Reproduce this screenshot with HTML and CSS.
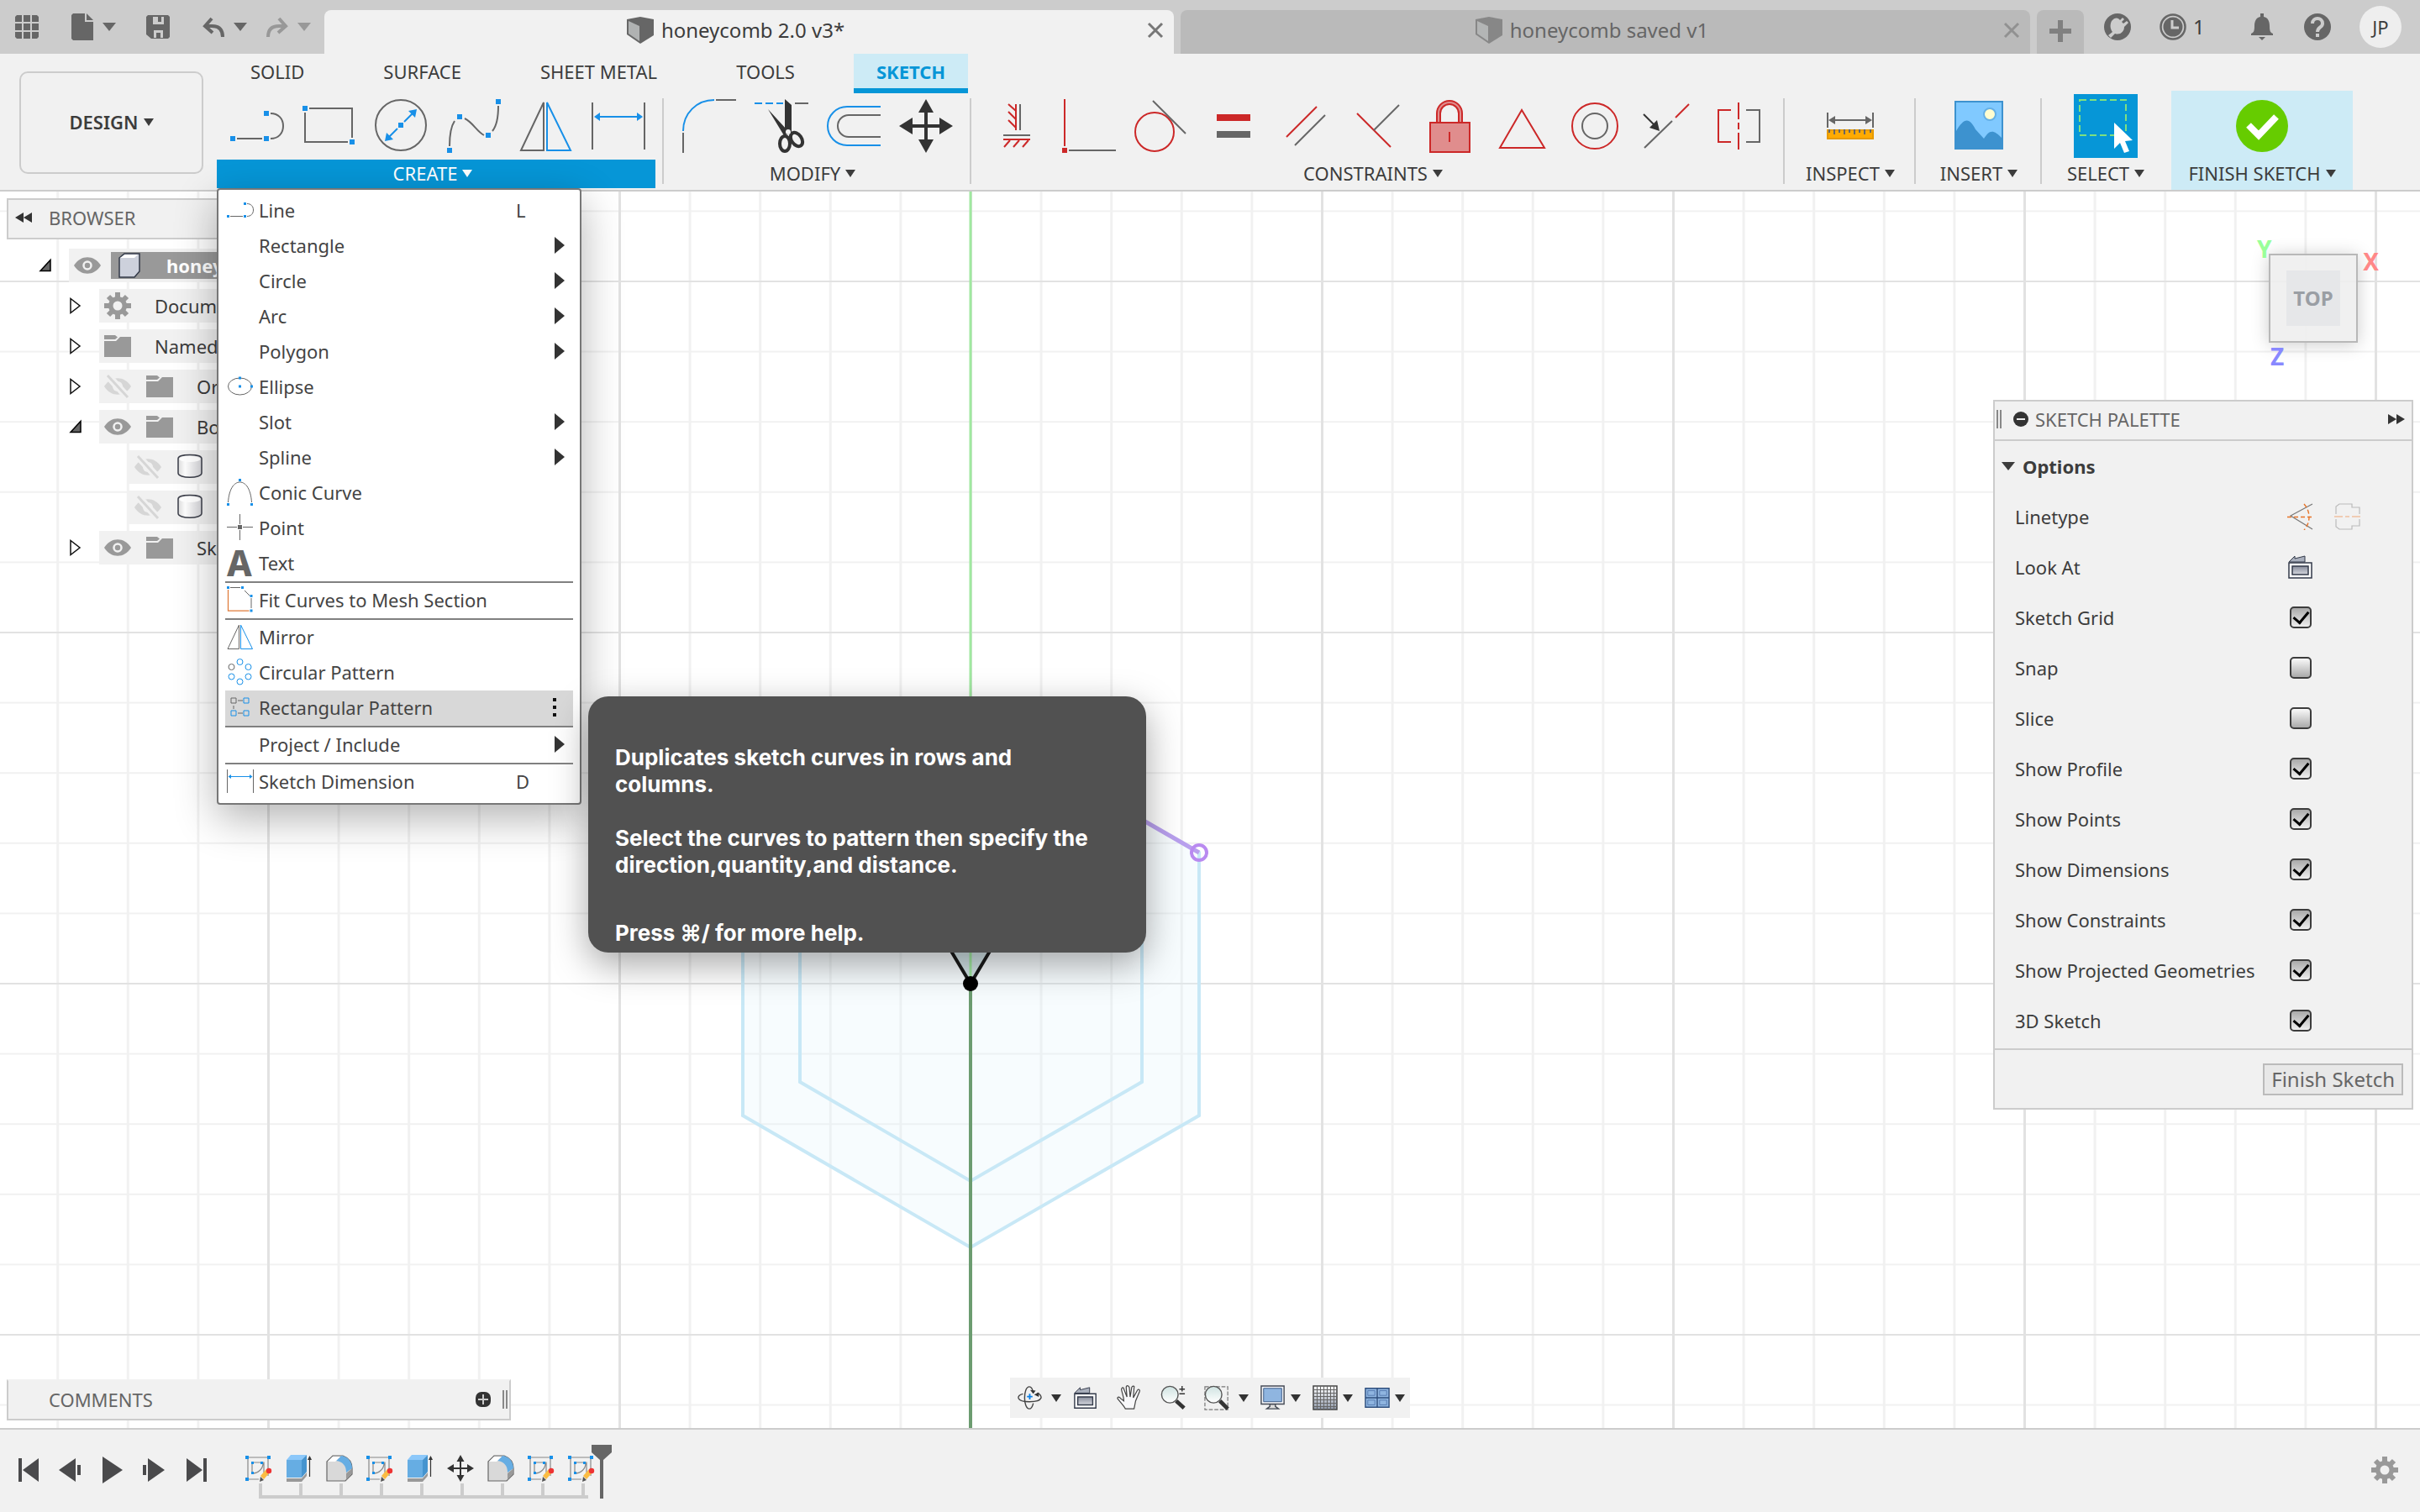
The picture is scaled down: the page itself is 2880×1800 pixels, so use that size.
FILE: index.html
```html
<!DOCTYPE html>
<html lang="en">
<head>
    <meta charset="UTF-8">
    <meta name="viewport" content="width=device-width, initial-scale=1.0">
    <title>honeycomb 2.0 v3*</title>
    <link rel="stylesheet" href="styles.css">
</head>
<body>
    <!-- shared icons -->
    <svg class="defs" width="0" height="0" aria-hidden="true">
        <defs>
            <linearGradient id="steel" x1="0" y1="0" x2="0" y2="1"><stop offset="0" stop-color="#878c9b"/><stop offset="1" stop-color="#d5d7de"/></linearGradient>
            <linearGradient id="fade" x1="0" y1="0" x2="0" y2="1"><stop offset="0" stop-color="#fff"/><stop offset="1" stop-color="#8d97a8"/></linearGradient>
            <linearGradient id="cyl" x1="0" y1="0" x2="1" y2="0"><stop offset="0" stop-color="#ddd"/><stop offset="0.3" stop-color="#fff"/><stop offset="1" stop-color="#d4d4d8"/></linearGradient>
            <linearGradient id="lens" x1="0" y1="0" x2="0" y2="1"><stop offset="0" stop-color="#cfe3e1"/><stop offset="1" stop-color="#fff"/></linearGradient>
        </defs>
        <symbol id="i-line" viewBox="0 0 64 64">
            <path class="g" d="M8 47H38M48 17c9 0 15 6 15 15s-6 15-15 15"/>
            <path class="bf" d="M0 44h6v6H0zM40 44h6v6h-6zM40 14h6v6h-6z"/>
        </symbol>
        <symbol id="i-rect" viewBox="0 0 64 64">
            <path class="g" d="M8 11H59V46M54 51H3V16"/>
            <path class="bf" d="M0 8h6v6H0zM56 48h6v6h-6z"/>
        </symbol>
        <symbol id="i-circle" viewBox="0 0 64 64">
            <circle class="g" cx="31" cy="31" r="30"/>
            <path class="b" d="M35 27l11-11M27 35L16 46"/>
            <path class="bf" d="M28 28h6v6h-6zM50 12l-2 10-8-8zM12 50l2-10 8 8z"/>
        </symbol>
        <symbol id="i-spline" viewBox="0 0 64 64">
            <path class="g" d="M3 56C3 42 5 32 9 26M21 23c10 5 14 15 23 20M54 38c5-6 7-18 7-30"/>
            <path class="bf" d="M0 58h6v6H0zM12 18h6v6h-6zM46 40h6v6h-6zM58 0h6v6h-6z"/>
        </symbol>
        <symbol id="i-mirror" viewBox="0 0 64 64">
            <path class="g" d="M29 4V61H2z"/>
            <path class="b" d="M33 4V61H61z"/>
        </symbol>
        <symbol id="i-dim" viewBox="0 0 64 64">
            <path class="g" d="M1 4V60M63 4V60"/>
            <path class="b" stroke-width="3" d="M8 21H56"/>
            <path class="bf" d="M3 21l7-5v10zM61 21l-7-5v10z"/>
        </symbol>
        <symbol id="i-move" viewBox="0 0 64 64">
            <path fill="#333" d="M32 0l9 16h-7v14h14v-8l16 10-16 10v-8H34v14h7l-9 16-9-16h7V34H16v8L0 32l16-10v8h14V16h-7z"/>
        </symbol>
        <symbol id="i-cube" viewBox="0 0 32 32">
            <path fill="#666" d="M0 3L16 0l16 3v19L16 32 0 21z"/>
            <path fill="#b0b2b2" d="M2 5l13 6v18L2 20z"/>
        </symbol>
        <symbol id="i-eye" viewBox="0 0 32 32">
            <path fill="#999" d="M0 16C8 3 24 3 32 16 24 29 8 29 0 16z"/>
            <circle cx="16" cy="16" r="4.5" fill="none" stroke="#f1f1f1" stroke-width="2.5"/>
        </symbol>
        <symbol id="i-eye-off" viewBox="0 0 32 32">
            <path fill="#d6d6d6" d="M0 16C8 3 24 3 32 16 24 29 8 29 0 16z"/>
            <circle cx="16" cy="16" r="6" fill="#f1f1f1"/>
            <path stroke="#f1f1f1" stroke-width="9" d="M4 3l24 26"/>
            <path stroke="#d6d6d6" stroke-width="3" d="M4 3l24 26"/>
        </symbol>
        <symbol id="i-folder" viewBox="0 0 32 32">
            <path fill="#999" d="M0 3h13l3 2.500-3 2.500H0zM0 10h14l5-5h13v24H0z"/>
        </symbol>
        <symbol id="i-gear" viewBox="0 0 32 32">
            <path stroke="#999" stroke-width="6" d="M16 0V32M0 16H32M5 5l22 22M27 5L5 27"/>
            <circle cx="16" cy="16" r="11" fill="#999"/>
            <circle cx="16" cy="16" r="5.500" fill="#f1f1f1"/>
        </symbol>
        <symbol id="i-body" viewBox="0 0 32 32">
            <path fill="url(#cyl)" stroke="#3a3d48" stroke-width="1.500" d="M2 6v17c0 7 28 7 28 0V6c0-6-28-6-28 0z"/>
            <ellipse cx="16" cy="6.500" rx="12.500" ry="3.500" fill="#fff"/>
        </symbol>
        <symbol id="i-closed" viewBox="0 0 16 20">
            <path fill="#fff" stroke="#111" stroke-width="1.500" d="M2 1.500V18.500L13 10z"/>
        </symbol>
        <symbol id="i-open" viewBox="0 0 16 16">
            <path fill="#666" stroke="#000" stroke-width="1.500" d="M14 1.500V14.500H2z"/>
        </symbol>
        <symbol id="i-lookat" viewBox="0 0 32 32">
            <path fill="#aab0bd" stroke="#333a4a" d="M2 10l7-7v3l12-3v7z"/>
            <path fill="#fff" stroke="#333a4a" stroke-width="1.500" d="M2 11h27v18H2z"/>
            <path fill="url(#steel)" stroke="#333a4a" stroke-width="1.500" d="M6 15h19v10H6z"/>
        </symbol>
        <symbol id="t-sketch" viewBox="0 0 32 32">
            <path fill="none" stroke="#888" stroke-width="1.200" d="M3 3h24v22M3 3v26h13M8 9h14v12M8 22c8 0 13-6 13-12M8 9v12"/>
            <path class="bf" d="M0 1h4v4H0zM26 1h4v4h-4zM0 27h4v4H0zM7 8h3v3H7zM18 8h3v3h-3zM7 20h3v3H7z"/>
            <path fill="#fbbc43" d="M18 25l7-8 4 4-7 8z"/>
            <path fill="#555" d="M18 26l4 4-5 2z"/>
            <circle cx="28" cy="19" r="3.200" fill="#e33"/>
        </symbol>
        <symbol id="t-extrude" viewBox="0 0 32 32">
            <path fill="#999" d="M1 28h18l6-7v4l-6 7H1z"/>
            <path fill="#66ade3" d="M1 6h18v21H1z"/>
            <path fill="#8cc8fa" d="M1 6l5-6h19l-6 6z"/>
            <path fill="#4594cf" d="M25 0v20l-6 7V6z"/>
            <path stroke="#333" stroke-width="1.200" d="M28.500 26V3"/>
            <path fill="#333" d="M28.500 1l2.500 5h-5z"/>
        </symbol>
        <symbol id="t-fillet" viewBox="0 0 32 32">
            <path fill="#d9d9d9" stroke="#666" stroke-width="1.200" d="M1 31V8L8 1h12c8 3 11 9 11 15v7l-8 8z"/>
            <path fill="#66ade3" d="M12 7l6-6c8 1 13 7 13 15l-7 5C24 13 20 8 12 7z"/>
            <path fill="#fff" d="M2 8l6-6h9l-6 6z"/>
            <path fill="#999" d="M24 22l6-5v6l-6 7z"/>
        </symbol>
    </svg>

    <header class="appbar">
        <div class="quick">
            <button aria-label="Data panel"><svg viewBox="0 0 32 32"><path fill="#666" d="M4 2h6v8H2V4zM12 2h8v8h-8zM22 2h6l2 2v6h-8zM2 12h8v8H2zM12 12h8v8h-8zM22 12h8v8h-8zM2 22h8v8H4l-2-2zM12 22h8v8h-8zM22 22h8v6l-2 2h-6z"/></svg></button>
            <button class="pair" aria-label="File"><svg viewBox="0 0 32 32"><path fill="#666" d="M5 0h14v10h10v22H5L3 30V2zM21 0l8 8h-8z"/></svg><span class="caret big"></span></button>
            <button aria-label="Save"><svg viewBox="0 0 32 32"><path fill="#666" fill-rule="evenodd" d="M4 2h24l2 2v24l-2 2H8l-6-5V4zM10 4v9h13V4h-3v6h-4V4zM11 20v9h3v-6h5v6h3v-9z"/></svg></button>
            <div class="history">
                <button class="pair" aria-label="Undo"><svg viewBox="0 0 32 32"><path fill="none" stroke="#666" stroke-width="4" d="M14 6L6 15l9 8M6 15h8c9 0 13 5 13 13"/></svg><span class="caret big"></span></button>
                <button class="pair dim" aria-label="Redo"><svg viewBox="0 0 32 32"><path fill="none" stroke="#666" stroke-width="4" d="M18 6l8 9-9 8M26 15h-8C9 15 5 20 5 28"/></svg><span class="caret big"></span></button>
            </div>
        </div>
        <div class="doctab active">
            <div class="doctitle"><svg><use href="#i-cube"/></svg>honeycomb 2.0 v3*</div>
            <button class="close" aria-label="Close"><svg viewBox="0 0 20 20"><path d="M2 2l16 16M18 2L2 18"/></svg></button>
        </div>
        <div class="doctab">
            <div class="doctitle"><svg><use href="#i-cube"/></svg>honeycomb saved v1</div>
            <button class="close" aria-label="Close"><svg viewBox="0 0 20 20"><path d="M2 2l16 16M18 2L2 18"/></svg></button>
        </div>
        <button class="newtab" aria-label="New tab"><svg viewBox="0 0 26 26"><path fill="#808080" d="M10 0h6v10h10v6H16v10h-6V16H0v-6h10z"/></svg></button>
        <div class="status">
            <button aria-label="Extensions"><svg viewBox="0 0 32 32"><circle cx="16" cy="16" r="16" fill="#666"/><path fill="#ccc" d="M9 9c4-5 8-4 10-1l3-3 2 2-3 3 2 2 4-3 2 2-5 5c0 6-5 10-11 8l-5 5-3-3 5-4c-3-4-3-9-1-13z"/></svg></button>
            <button class="jobs" aria-label="Job status"><svg viewBox="0 0 32 32"><circle cx="16" cy="16" r="14.500" fill="none" stroke="#666" stroke-width="2.500"/><circle cx="16" cy="16" r="11.500" fill="#666"/><path fill="none" stroke="#ccc" stroke-width="3" d="M15 8v9h8"/></svg>1</button>
            <button aria-label="Notifications"><svg viewBox="0 0 32 32"><path fill="#666" d="M14 0h4v4c5 1 7 5 7 11 0 6 1 8 4 9v2H3v-2c3-1 4-3 4-9 0-6 2-10 7-11zM12 28h8l-4 4z"/></svg></button>
            <button aria-label="Help"><svg viewBox="0 0 32 32"><circle cx="16" cy="16" r="16" fill="#666"/><path fill="none" stroke="#ccc" stroke-width="4" d="M10 12c0-8 12-8 12 0 0 5-6 4-6 10"/><path fill="#ccc" d="M14 24h4v4h-4z"/></svg></button>
            <button class="avatar">JP</button>
        </div>
    </header>

    <section class="ribbon">
        <button class="workspace">DESIGN <span class="caret"></span></button>
        <div class="ribbon-main">
            <nav class="tabs">
                <a href="#">SOLID</a>
                <a href="#">SURFACE</a>
                <a href="#">SHEET METAL</a>
                <a href="#">TOOLS</a>
                <a href="#" class="active">SKETCH</a>
            </nav>
            <div class="groups">
                <div class="group create">
                    <div class="tools">
                        <svg><use href="#i-line"/></svg>
                        <svg><use href="#i-rect"/></svg>
                        <svg><use href="#i-circle"/></svg>
                        <svg><use href="#i-spline"/></svg>
                        <svg><use href="#i-mirror"/></svg>
                        <svg><use href="#i-dim"/></svg>
                    </div>
                    <div class="dropdown">
                        <button class="label open">CREATE <span class="caret"></span></button>
                        <ul class="menu">
                            <li><button><svg><use href="#i-line"/></svg>Line<kbd>L</kbd></button></li>
                            <li><button><i></i>Rectangle<span class="sub"></span></button></li>
                            <li><button><i></i>Circle<span class="sub"></span></button></li>
                            <li><button><i></i>Arc<span class="sub"></span></button></li>
                            <li><button><i></i>Polygon<span class="sub"></span></button></li>
                            <li><button><svg viewBox="0 0 64 64"><ellipse class="g" cx="31" cy="32" rx="28" ry="20"/><path class="bf" d="M28 29h6v6h-6zM28 9h6v6h-6zM56 29h6v6h-6z"/></svg>Ellipse</button></li>
                            <li><button><i></i>Slot<span class="sub"></span></button></li>
                            <li><button><i></i>Spline<span class="sub"></span></button></li>
                            <li><button><svg viewBox="0 0 64 64"><path class="g" d="M3 56C5 26 16 8 31 8s26 18 28 48"/><path class="bf" d="M0 58h6v6H0zM56 58h6v6h-6zM28 0h6v6h-6z"/></svg>Conic Curve</button></li>
                            <li><button><svg viewBox="0 0 64 64"><path class="g" d="M31 0V24M31 38V62M0 31H24M38 31H62"/><path fill="#666" d="M26 26h10v10H26z"/></svg>Point</button></li>
                            <li><button><b class="glyph">A</b>Text</button></li>
                            <li class="sep"><button><svg viewBox="0 0 64 64"><path class="g" d="M8 3h24M42 10l12 12M58 28v24"/><path fill="none" stroke="#e07b39" stroke-width="2.500" d="M3 8v50h50"/><path class="bf" d="M0 0h6v6H0zM34 0h6v6h-6zM55 20h6v6h-6zM55 55h6v6h-6z"/></svg>Fit Curves to Mesh Section</button></li>
                            <li class="sep"><button><svg><use href="#i-mirror"/></svg>Mirror</button></li>
                            <li><button><svg viewBox="0 0 64 64"><circle class="g" cx="11" cy="20" r="7"/><g class="b"><circle cx="31" cy="8" r="7"/><circle cx="51" cy="20" r="7"/><circle cx="11" cy="43" r="7"/><circle cx="51" cy="43" r="7"/><circle cx="31" cy="55" r="7"/></g></svg>Circular Pattern</button></li>
                            <li class="hover"><button><svg viewBox="0 0 64 64"><path class="g" d="M10 10h12v12H10zM26 16h12M16 28v8M26 46h12"/><path class="b" d="M40 10h12v12H40zM10 40h12v12H10zM40 40h12v12H40z"/></svg>Rectangular Pattern<span class="more"></span></button>
                                <div class="tooltip">
                                    <p>Duplicates sketch curves in rows and columns.</p>
                                    <p>Select the curves to pattern then specify the direction,quantity,and distance.</p>
                                    <p class="help">Press ⌘/ for more help.</p>
                                </div>
                            </li>
                            <li class="sep"><button><i></i>Project / Include<span class="sub"></span></button></li>
                            <li class="sep"><button><svg><use href="#i-dim"/></svg>Sketch Dimension<kbd>D</kbd></button></li>
                        </ul>
                    </div>
                </div>
                <div class="group">
                    <div class="tools">
                        <svg viewBox="0 0 64 64"><path class="b" d="M1 38C1 17 17 1 38 1"/><path class="g" d="M1 40v24M40 1h24"/></svg>
                        <svg viewBox="0 0 64 64"><path class="b" stroke-dasharray="9 4" d="M0 5h34"/><path class="g" d="M48 5h16"/><path fill="#333" d="M36 0l8 7v34l-8 2zM16 12l22 24-2 9z"/><g fill="none" stroke="#333" stroke-width="4"><ellipse cx="36" cy="53" rx="6" ry="9"/><ellipse cx="50" cy="48" rx="6" ry="9" transform="rotate(-35 50 48)"/></g><circle cx="40" cy="39" r="3" fill="#f1f1f1"/></svg>
                        <svg viewBox="0 0 64 64"><path class="b" d="M64 9H24a23 23 0 0 0 0 46h40"/><path class="g" d="M64 19H26a13 13 0 0 0 0 26h38"/></svg>
                        <svg><use href="#i-move"/></svg>
                    </div>
                    <button class="label">MODIFY <span class="caret"></span></button>
                </div>
                <div class="group">
                    <div class="tools">
                        <svg viewBox="0 0 64 64"><path class="r" d="M31 6v31M31 14l-9-8M31 24l-9-9M31 34l-9-9M16 48h32M24 49l-7 8M35 49l-7 8M46 49l-7 8"/><path class="g" d="M36 6v31M16 43h32"/></svg>
                        <svg viewBox="0 0 64 64"><path class="r" d="M3 0v56"/><path fill="#cc2828" d="M0 58h6v6H0z"/><path class="g" d="M8 61h56"/></svg>
                        <svg viewBox="0 0 64 64"><circle class="r" cx="24" cy="39" r="23"/><path class="g" d="M22 2l39 39"/></svg>
                        <svg viewBox="0 0 64 64"><path fill="#cc2828" d="M12 18h40v8H12z"/><path fill="#666" d="M12 38h40v8H12z"/></svg>
                        <svg viewBox="0 0 64 64"><path class="r" d="M9 45L45 9"/><path class="g" d="M19 55l36-36"/></svg>
                        <svg viewBox="0 0 64 64"><path class="r" d="M7 17l40 40"/><path class="g" d="M57 7L27 37"/></svg>
                        <svg viewBox="0 0 64 64"><path fill="none" stroke="#cc2828" stroke-width="6" d="M18 27V17a13 13 0 0 1 26 0v10"/><path fill="none" stroke="#e08d8d" stroke-width="2" d="M18 27V17a13 13 0 0 1 26 0v10"/><path fill="#e08d8d" stroke="#cc2828" stroke-width="2" d="M8 28h47v35H8z"/><path class="r" d="M31 39v12"/></svg>
                        <svg viewBox="0 0 64 64"><path class="r" d="M31 13L5 58h53z"/></svg>
                        <svg viewBox="0 0 64 64"><circle class="r" cx="32" cy="32" r="27"/><circle class="g" cx="32" cy="32" r="15"/></svg>
                        <svg viewBox="0 0 64 64"><path class="g" d="M5 58l33-32"/><path class="r" d="M42 22L58 6"/><path stroke="#333" stroke-width="2" d="M4 18l12 12"/><path fill="#333" d="M23 38l-3-13-9 9z"/></svg>
                        <svg viewBox="0 0 64 64"><path class="r" d="M22 13H7v38h15M31 4v20M31 28v8M31 40v20"/><path class="g" d="M40 13h16v38H40"/></svg>
                    </div>
                    <button class="label">CONSTRAINTS <span class="caret"></span></button>
                </div>
                <div class="group single">
                    <div class="tools">
                        <svg viewBox="0 0 64 64"><path class="g" d="M5 16v18M59 16v18M10 25h44"/><path fill="#666" d="M6 25l8-5v10zM58 25l-8-5v10z"/><path fill="#fa0" stroke="#e69a00" stroke-width="2" d="M5 37h54v10H5z"/><path stroke="#666" stroke-width="2" d="M7 36v4M13 36v6M19 36v4M25 36v6M31 36v4M37 36v6M43 36v4M49 36v6M56 36v4"/></svg>
                    </div>
                    <button class="label">INSPECT <span class="caret"></span></button>
                </div>
                <div class="group single">
                    <div class="tools">
                        <svg viewBox="0 0 64 64"><path fill="#80c9ff" stroke="#3d92cf" stroke-width="2" d="M4 3h56v56H4z"/><path fill="#3d92cf" d="M4 40c11-20 17-17 24-4l10 11c6-9 10-13 22 0v13H4z"/><circle cx="45" cy="18" r="7" fill="#fffdd0" stroke="#65b0e6" stroke-width="2"/></svg>
                    </div>
                    <button class="label">INSERT <span class="caret"></span></button>
                </div>
                <div class="group single select">
                    <div class="tools">
                        <svg viewBox="0 0 76 76"><path fill="none" stroke="#7fe07f" stroke-width="2" stroke-dasharray="8 4" d="M7 7h55v42H7z"/><path fill="#fff" d="M48 34l22 21-9 1 5 12-6 2-5-12-7 7z"/></svg>
                    </div>
                    <button class="label">SELECT <span class="caret"></span></button>
                </div>
                <div class="group finish">
                    <div class="tools">
                        <svg viewBox="0 0 64 64"><circle cx="32" cy="32" r="31" fill="#6c0"/><path fill="none" stroke="#fff" stroke-width="8" d="M16 31l12 12 21-22"/></svg>
                    </div>
                    <button class="label">FINISH SKETCH <span class="caret"></span></button>
                </div>
            </div>
        </div>
    </section>

    <main class="canvas">
        <svg class="scene" viewBox="0 0 2880 1472" preserveAspectRatio="xMidYMid slice" aria-hidden="true">
            <defs>
                <pattern id="minor" x="1154" y="942" width="83.6" height="83.6" patternUnits="userSpaceOnUse"><path fill="#f1f1f1" d="M0 0h83.6v2H3v81.600H0z"/></pattern>
                <pattern id="major" x="1154" y="942" width="418" height="418" patternUnits="userSpaceOnUse"><path fill="#e2e2e2" d="M0 0h418v2H3v416H0z"/></pattern>
            </defs>
            <rect width="2880" height="1472" fill="url(#minor)"/>
            <rect width="2880" height="1472" fill="url(#major)"/>
            <path fill="#e0f4fa" fill-opacity="0.25" stroke="#c8e8f6" stroke-width="4" d="M1155 630l272 157v313l-272 157-271-157V787z"/>
            <path fill="none" stroke="#c8e8f6" stroke-width="4" d="M1155 708l204 117v235l-204 118-203-118V825z"/>
            <path fill="none" stroke="#b9a0ee" stroke-width="5" d="M1155 630l272 157"/>
            <circle cx="1427" cy="787" r="9" fill="none" stroke="#b98af0" stroke-width="4"/>
            <path fill="#d3e4e8" d="M1130 901l25 42 25-42z"/>
            <path stroke="#a0e8a0" stroke-width="3" d="M1155 0V943"/>
            <path stroke="#6c9c70" stroke-width="4" d="M1155 943V1472"/>
            <path fill="none" stroke="#1a1a1a" stroke-width="4" d="M1130 901l25 42 25-42"/>
            <circle cx="1155" cy="943" r="9"/>
        </svg>

        <aside class="browser">
            <h2 class="bar"><svg class="fold" viewBox="0 0 20 14"><path fill="#333" d="M10 1v12L0 7zM20 1v12L10 7z"/></svg>BROWSER</h2>
            <ul class="tree">
                <li class="root"><svg class="tw"><use href="#i-open"/></svg><div class="node"><svg><use href="#i-eye"/></svg><span class="picked"><svg viewBox="0 0 32 32"><path fill="#cdd1dc" stroke="#333a48" stroke-width="1.500" d="M4 7l6-5h18v21l-6 7H4z"/><path fill="#fff" d="M5 7l6-4h15l-4 4z"/></svg>honey</span></div></li>
                <li><svg class="tw"><use href="#i-closed"/></svg><div class="node"><svg><use href="#i-gear"/></svg><span class="wide">Docum</span></div></li>
                <li><svg class="tw"><use href="#i-closed"/></svg><div class="node"><svg><use href="#i-folder"/></svg><span class="wide">Named</span></div></li>
                <li><svg class="tw"><use href="#i-closed"/></svg><div class="node"><svg><use href="#i-eye-off"/></svg><svg><use href="#i-folder"/></svg><span class="wide">Or</span></div></li>
                <li><svg class="tw"><use href="#i-open"/></svg><div class="node"><svg><use href="#i-eye"/></svg><svg><use href="#i-folder"/></svg><span class="wide">Bo</span></div></li>
                <li class="leaf"><div class="node"><svg><use href="#i-eye-off"/></svg><svg><use href="#i-body"/></svg></div></li>
                <li class="leaf"><div class="node"><svg><use href="#i-eye-off"/></svg><svg><use href="#i-body"/></svg></div></li>
                <li><svg class="tw"><use href="#i-closed"/></svg><div class="node"><svg><use href="#i-eye"/></svg><svg><use href="#i-folder"/></svg><span class="wide">Sk</span></div></li>
            </ul>
        </aside>

        <div class="viewcube">
            <span class="axis y">Y</span>
            <span class="axis x">X</span>
            <span class="axis z">Z</span>
            <button class="face"><span>TOP</span></button>
        </div>

        <aside class="palette">
            <h2 class="bar"><span class="grip"></span><svg class="dot" viewBox="0 0 18 18"><circle cx="9" cy="9" r="9" fill="#333"/><path stroke="#eee" stroke-width="2" d="M4 9h10"/></svg>SKETCH PALETTE<svg class="fold" viewBox="0 0 20 14"><path fill="#333" d="M0 1v12l10-6zM10 1v12l10-6z"/></svg></h2>
            <div class="options">
                <h3><span class="caret big"></span>Options</h3>
                <div class="opt"><span>Linetype</span>
                    <button aria-label="Construction"><svg viewBox="0 0 32 32"><path fill="none" stroke="#777" stroke-width="1.200" d="M30 1L4 15l26 16"/><path fill="none" stroke="#e8752a" stroke-width="1.400" stroke-dasharray="5 3" d="M0 16.500h32M20 1c8 9 8 22 0 31"/></svg></button>
                    <button aria-label="Centerline"><svg viewBox="0 0 32 32"><path fill="none" stroke="#bbb" stroke-width="1.200" d="M2 13V4l4-3h15v4h9v8M2 19v9l4 3h15v-4h9v-8"/><path stroke="#f0c0a0" stroke-width="1.400" stroke-dasharray="10 3 5 3" d="M0 16h32"/></svg></button>
                </div>
                <div class="opt"><span>Look At</span><button aria-label="Look At"><svg><use href="#i-lookat"/></svg></button></div>
                <div class="opt"><label for="grid">Sketch Grid</label><input type="checkbox" id="grid" checked></div>
                <div class="opt"><label for="snap">Snap</label><input type="checkbox" id="snap"></div>
                <div class="opt"><label for="slice">Slice</label><input type="checkbox" id="slice"></div>
                <div class="opt"><label for="profile">Show Profile</label><input type="checkbox" id="profile" checked></div>
                <div class="opt"><label for="points">Show Points</label><input type="checkbox" id="points" checked></div>
                <div class="opt"><label for="dims">Show Dimensions</label><input type="checkbox" id="dims" checked></div>
                <div class="opt"><label for="cons">Show Constraints</label><input type="checkbox" id="cons" checked></div>
                <div class="opt"><label for="proj">Show Projected Geometries</label><input type="checkbox" id="proj" checked></div>
                <div class="opt"><label for="sk3d">3D Sketch</label><input type="checkbox" id="sk3d" checked></div>
            </div>
            <div class="actions"><button>Finish Sketch</button></div>
        </aside>

        <div class="comments bar">COMMENTS
            <svg class="dot" viewBox="0 0 18 18"><rect width="18" height="18" rx="7" fill="#333"/><path stroke="#ccc" stroke-width="2" d="M3 9h12M9 3v12"/></svg><span class="grip"></span>
        </div>

        <div class="navbar">
            <button class="pair wide" aria-label="Orbit"><svg viewBox="0 0 32 32"><g fill="none" stroke="#444" stroke-width="1.500"><path d="M21 10C20 4 18 2 16 2c-4 0-6 7-6 14s2 14 6 14c3 0 4-3 5-7"/><path d="M8 11c-9 2-9 10 8 10 9 0 14-2 15-5 0-3-2-5-5-6"/></g><path fill="#333" d="M17 6l7 1-3 4zM22 12l6-3v6z"/><path stroke="#0a80e8" stroke-width="2" d="M16.500 11v7M13 14.500h7"/></svg><span class="caret"></span></button>
            <button aria-label="Look at"><svg><use href="#i-lookat"/></svg></button>
            <button aria-label="Pan"><svg viewBox="0 0 32 32"><path fill="#f8f8fa" stroke="#444" stroke-width="1.300" d="M11 30C9 26 4 21 1 17c0-3 3-2 4 0l4 3C9 14 6 8 6 5c1-3 3-2 3 0l4 10-1-12c0-3 3-3 4 0l1 12 2-12c1-3 4-2 3 0l-1 13 5-9c1-3 4-1 3 1l-5 12-2 10z"/></svg></button>
            <button aria-label="Zoom"><svg viewBox="0 0 32 32"><path stroke="#333" stroke-width="5" d="M20 20l10 9"/><circle cx="12" cy="12" r="10.500" fill="url(#lens)" stroke="#555" stroke-width="1.500"/><path stroke="#333" stroke-width="1.500" d="M24 5h7M27.500 1v7M24 11h7"/></svg></button>
            <button class="pair wide" aria-label="Fit"><svg viewBox="0 0 32 32"><path fill="none" stroke="#777" stroke-width="1.300" stroke-dasharray="5 2" d="M1 2h29v29H1z"/><path stroke="#333" stroke-width="5" d="M20 20l10 10"/><circle cx="12" cy="12" r="10.500" fill="url(#lens)" stroke="#555" stroke-width="1.500"/></svg><span class="caret"></span></button>
            <button class="pair" aria-label="Display settings"><svg viewBox="0 0 32 32"><path fill="#ddd" stroke="#444a55" stroke-width="1.500" d="M12 24h7v3l4 3H8l4-3z"/><path fill="#f4f5f8" stroke="#444a55" stroke-width="1.500" d="M1 1h29v23H1z"/><path fill="#8fb5e0" stroke="#3a5a85" d="M4 4h23v17H4z"/></svg><span class="caret"></span></button>
            <button class="pair" aria-label="Grid"><svg viewBox="0 0 30 30"><path fill="url(#fade)" stroke="#444" stroke-width="1.500" d="M1 1h28v28H1z"/><path stroke="#666" stroke-width="1" d="M5.500 1v28M9.500 1v28M13.500 1v28M17.500 1v28M21.500 1v28M25.500 1v28M1 5.500h28M1 9.500h28M1 13.500h28M1 17.500h28M1 21.500h28M1 25.500h28"/></svg><span class="caret"></span></button>
            <button class="pair" aria-label="Viewports"><svg viewBox="0 0 32 32"><path fill="#8fb5e0" stroke="#2f4f7d" stroke-width="1.500" d="M1 4h30v24H1zM16 4v24M1 16h30"/><path fill="none" stroke="#557bb0" d="M4 7h9v6H4zM19 7h9v6h-9zM4 19h9v6H4zM19 19h9v6h-9z"/></svg><span class="caret"></span></button>
        </div>
    </main>

    <footer class="timeline">
        <div class="player">
            <button aria-label="Start"><svg viewBox="0 0 32 32"><path fill="#4a4a4c" d="M4 2h4v28H4zM28 2v28L9 16z"/></svg></button>
            <button aria-label="Back"><svg viewBox="0 0 32 32"><path fill="#4a4a4c" d="M22 2v28L2 16zM24 10h4v12h-4z"/></svg></button>
            <button aria-label="Play"><svg viewBox="0 0 32 32"><path fill="#4a4a4c" d="M4 0v32l24-16z"/></svg></button>
            <button aria-label="Forward"><svg viewBox="0 0 32 32"><path fill="#4a4a4c" d="M8 2v28l20-14zM2 10h4v12H2z"/></svg></button>
            <button aria-label="End"><svg viewBox="0 0 32 32"><path fill="#4a4a4c" d="M4 2v28l19-14zM24 2h4v28h-4z"/></svg></button>
        </div>
        <ol class="steps">
            <li><svg><use href="#t-sketch"/></svg></li>
            <li><svg><use href="#t-extrude"/></svg></li>
            <li><svg><use href="#t-fillet"/></svg></li>
            <li><svg><use href="#t-sketch"/></svg></li>
            <li><svg><use href="#t-extrude"/></svg></li>
            <li><svg><use href="#i-move"/></svg></li>
            <li><svg><use href="#t-fillet"/></svg></li>
            <li><svg><use href="#t-sketch"/></svg></li>
            <li><svg><use href="#t-sketch"/></svg></li>
        </ol>
        <svg class="marker" viewBox="0 0 24 64"><path fill="#666" d="M0 0h24v9l-10 9v46h-4V18L0 9z"/></svg>
        <button class="settings" aria-label="Settings"><svg><use href="#i-gear"/></svg></button>
    </footer>
</body>
</html>
```
FILE: styles.css
```css
* {
    box-sizing: border-box;
}
body {
    margin: 0;
    height: 100vh;
    display: flex;
    flex-direction: column;
    overflow: hidden;
    font-family: "Noto Sans", "Open Sans", sans-serif;
    font-size: 22px;
    line-height: 30px;
    color: #3c3c3c;
    background: #fff;
}
button {
    font: inherit;
    color: inherit;
    text-align: left;
    background: none;
    border: none;
    padding: 0;
    display: flex;
    align-items: center;
    cursor: pointer;
}
ul, ol {
    list-style: none;
    margin: 0;
    padding: 0;
}
svg {
    display: block;
    flex: none;
    width: 32px;
    height: 32px;
}
.defs {
    position: absolute;
    width: 0;
    height: 0;
}

/* strokes used in the icons */
.g {
    fill: none;
    stroke: #666;
    stroke-width: 2;
}
.b {
    fill: none;
    stroke: #1890e8;
    stroke-width: 2;
}
.r {
    fill: none;
    stroke: #cc2828;
    stroke-width: 2;
}
.bf {
    fill: #1890e8;
}
.caret {
    flex: none;
    border: 6px solid transparent;
    border-top: 9px solid currentColor;
    border-bottom: 0;
    margin-left: 6px;
}
.caret.big {
    border-width: 10px 8px 0;
    margin: 0;
}

/* top bar */
.appbar {
    display: flex;
    align-items: flex-end;
    gap: 8px;
    height: 64px;
    background: #ccc;
    flex: none;
}
.quick {
    display: flex;
    align-items: center;
    gap: 34px;
    width: 378px;
    height: 64px;
    padding-left: 16px;
    color: #666;
}
.pair {
    gap: 8px;
}
.history {
    display: flex;
    gap: 20px;
}
.dim {
    opacity: 0.5;
}
.doctab {
    flex: 1;
    display: flex;
    align-items: center;
    height: 52px;
    padding: 0 12px 4px 0;
    border-radius: 8px 8px 0 0;
    background: #bababa;
    color: #666;
    font-size: 24px;
}
.doctab.active {
    background: #f1f1f1;
    color: #3c3c3c;
}
.doctitle {
    flex: 1;
    display: flex;
    align-items: center;
    justify-content: center;
    gap: 9px;
}
.doctab:not(.active) svg {
    opacity: 0.6;
}
.close svg {
    width: 20px;
    height: 20px;
    fill: none;
    stroke: #777;
    stroke-width: 3;
}
.newtab {
    width: 56px;
    height: 52px;
    padding-bottom: 2px;
    justify-content: center;
    border-radius: 8px 8px 0 0;
    background: #bababa;
}
.newtab svg {
    width: 26px;
    height: 26px;
}
.status {
    display: flex;
    align-items: center;
    gap: 34px;
    height: 64px;
    padding: 0 22px 0 16px;
}
.jobs {
    gap: 8px;
    width: 72px;
    font-size: 24px;
}
.avatar {
    width: 50px;
    height: 50px;
    justify-content: center;
    border-radius: 50%;
    background: #eee;
}

/* ribbon */
.ribbon {
    display: flex;
    gap: 16px;
    height: 164px;
    padding-left: 23px;
    background: #f1f1f1;
    border-bottom: 2px solid #ccc;
    flex: none;
    position: relative;
    z-index: 2;
}
.workspace {
    width: 219px;
    height: 122px;
    margin-top: 21px;
    padding-bottom: 2px;
    justify-content: center;
    border: 2px solid #ccc;
    border-radius: 10px;
    font-weight: 600;
}
.tabs {
    display: flex;
    gap: 46px;
    height: 47px;
    padding-left: 16px;
    margin-bottom: -3px;
}
.tabs a {
    padding: 6px 24px 0;
    color: #3c3c3c;
    text-decoration: none;
}
.tabs a.active {
    padding: 6px 27px 0;
    background: #cdebf6;
    border-bottom: 6px solid #0696d7;
    color: #0696d7;
    font-weight: 700;
}
.groups {
    display: flex;
}
.group {
    position: relative;
    display: flex;
    flex-direction: column;
    align-items: center;
    gap: 8px;
    height: 118px;
    padding: 10px 20px 0 24px;
}
.group + .group:not(.finish)::before {
    content: "";
    position: absolute;
    left: 0;
    top: 9px;
    width: 2px;
    height: 102px;
    background: #ccc;
}
.tools {
    display: flex;
    gap: 22px;
}
.tools svg {
    width: 64px;
    height: 64px;
}
.label {
    height: 34px;
    padding: 0 12px 2px 0;
    justify-content: center;
}
.group.create {
    padding: 10px 8px 0 0;
}
.create .tools {
    padding-right: 12px;
    padding-left: 16px;
}
.dropdown {
    position: relative;
    width: 100%;
}
.label.open {
    width: 100%;
    padding-right: 8px;
    background: #0696d7;
    color: #fff;
}
.group.single {
    width: 156px;
    padding: 10px 0 0 4px;
}
.group.single + .single {
    width: 150px;
}
.group.single.select {
    width: 156px;
    padding-left: 0;
}
.single .label, .finish .label {
    padding-right: 0;
}
.select .tools svg {
    width: 76px;
    height: 76px;
    margin: -6px;
    background: #0696d7;
}
.group.finish {
    width: 216px;
    padding: 10px 0 0;
    background: #cdebf6;
}

/* create menu */
.menu {
    position: absolute;
    left: 0;
    top: 100%;
    width: 434px;
    padding: 4px 8px;
    background: #fff;
    border: 2px solid #777;
    border-radius: 4px;
    box-shadow: 0 16px 50px rgba(0, 0, 0, 0.3);
}
.menu li {
    position: relative;
}
.menu li.sep {
    border-top: 2px solid #808080;
}
.menu li > button {
    width: 100%;
    height: 42px;
    padding: 0 0 2px 2px;
    color: #444;
}
.menu svg, .menu i, .glyph {
    width: 32px;
    height: 32px;
    margin-right: 6px;
}
.glyph {
    font-weight: 800;
    font-size: 42px;
    line-height: 32px;
    color: #666;
}
.menu li.hover {
    background: #d8d8d8;
}
kbd {
    font-family: inherit;
    width: 68px;
    margin-left: auto;
}
.sub {
    margin-left: auto;
    margin-right: 10px;
    border: 10px solid transparent;
    border-left: 12px solid #333;
    border-right: 0;
}
.more {
    margin-left: auto;
    margin-right: 20px;
    width: 4px;
    height: 4px;
    background: #111;
    box-shadow: 0 -9px #111, 0 9px #111;
}
.tooltip {
    position: absolute;
    left: 432px;
    top: 7px;
    width: 664px;
    height: 305px;
    padding: 57px 48px 0 32px;
    border-radius: 24px;
    background: #515151;
    color: #fff;
    font-family: Inter, sans-serif;
    font-weight: 700;
    font-size: 26px;
    line-height: 32px;
    box-shadow: 0 14px 44px rgba(0, 0, 0, 0.35);
}
.tooltip p {
    margin: 0 0 32px;
}
.tooltip .help {
    padding-top: 17px;
}

/* canvas */
.canvas {
    position: relative;
    flex: 1;
    min-height: 0;
}
.scene {
    position: absolute;
    left: 0;
    top: 0;
    width: 100%;
    height: 100%;
}
.bar {
    display: flex;
    align-items: center;
    height: 49px;
    margin: 0;
    font-size: 22px;
    font-weight: 400;
    color: #666;
    background: #f1f1f1;
    border: 2px solid #ccc;
}
.fold {
    width: 20px;
    height: 14px;
}
.dot {
    width: 18px;
    height: 18px;
}
.grip {
    width: 6px;
    height: 22px;
    border-left: 2px solid #888;
    border-right: 2px solid #888;
}
.browser {
    position: absolute;
    left: 8px;
    top: 8px;
    width: 600px;
}
.browser .bar {
    padding: 0 0 3px 8px;
    gap: 20px;
}
.tree {
    display: flex;
    flex-direction: column;
    gap: 8px;
    width: 290px;
    padding-top: 11px;
    white-space: nowrap;
}
.tree li {
    display: flex;
    align-items: center;
    padding-left: 74px;
}
.tree li.root {
    padding-left: 38px;
}
.tree li.leaf {
    padding-left: 144px;
}
.tw {
    width: 16px;
    height: 20px;
    margin-right: 20px;
}
.node {
    flex: 1;
    display: flex;
    align-items: center;
    gap: 18px;
    height: 40px;
    padding-left: 6px;
    background: #f1f1f1;
}
.leaf .node {
    padding-left: 8px;
}
.node .wide {
    padding-left: 10px;
}
.picked {
    flex: 1;
    display: flex;
    align-items: center;
    gap: 28px;
    height: 32px;
    margin-left: -6px;
    padding-left: 6px;
    background: #999;
    color: #fff;
    font-weight: 700;
}
.comments {
    position: absolute;
    left: 8px;
    bottom: 9px;
    width: 600px;
    padding: 0 2px 2px 48px;
    border-top-color: #f1f1f1;
}
.comments .dot {
    margin-left: auto;
    margin-right: 14px;
}

.viewcube {
    position: absolute;
    right: 74px;
    top: 74px;
    width: 106px;
    height: 106px;
    font-weight: 700;
}
.face {
    width: 100%;
    height: 100%;
    justify-content: center;
    border: 2px solid #b8b8b8;
    background: rgba(238, 238, 238, 0.9);
    box-shadow: 0 2px 20px rgba(0, 0, 0, 0.2);
    color: #9a9ea4;
    font-size: 24px;
}
.face span {
    padding: 18px 8px;
    background: #e6e7e9;
}
.axis {
    position: absolute;
    font-size: 28px;
}
.axis.y {
    left: -14px;
    top: -21px;
    color: #9f9;
}
.axis.x {
    right: -25px;
    top: -6px;
    color: #f88;
}
.axis.z {
    left: 2px;
    bottom: -31px;
    color: #88f;
}

.palette {
    position: absolute;
    right: 8px;
    top: 248px;
    width: 500px;
}
.palette .bar {
    padding: 0 8px 3px 2px;
}
.palette .dot {
    margin: 0 8px 0 14px;
}
.palette .fold {
    margin-left: auto;
}
.options {
    padding-bottom: 3px;
    background: #f1f1f1;
    border: 2px solid #ccc;
    border-top: 0;
}
.options h3 {
    display: flex;
    align-items: center;
    gap: 9px;
    height: 60px;
    margin: 0;
    padding-left: 8px;
    font-size: 22px;
    font-weight: 700;
}
.opt {
    display: grid;
    grid-template-columns: 324px 56px 1fr;
    align-items: center;
    height: 60px;
    padding-left: 24px;
}
.opt button {
    width: 32px;
}
.opt input {
    appearance: none;
    width: 26px;
    height: 26px;
    margin: 0 3px;
    border: 2px solid #3c3c3c;
    border-radius: 5px;
    background: linear-gradient(#fafafa, #aaa);
}
.opt input:checked {
    background: linear-gradient(#aaa, #eee);
    display: grid;
    place-items: center;
}
.opt input:checked::before {
    content: "";
    width: 8px;
    height: 15px;
    margin-bottom: 4px;
    border: solid #000;
    border-width: 0 3px 3px 0;
    transform: rotate(40deg);
}
.actions {
    display: flex;
    justify-content: flex-end;
    padding: 16px 10px 15px;
    background: #f1f1f1;
    border: 2px solid #ccc;
    border-top: 0;
}
.actions button {
    height: 38px;
    padding: 0 8px;
    border: 2px solid #bbb;
    background: #e8e8e8;
    color: #666;
    font-size: 24px;
}

.navbar {
    position: absolute;
    left: 50%;
    bottom: 12px;
    transform: translateX(-50%);
    display: flex;
    align-items: center;
    gap: 14px;
    height: 48px;
    padding: 0 6px 0 8px;
    background: #f1f1f1;
    color: #333;
}
.navbar svg {
    width: 30px;
    height: 30px;
}
.navbar button:not(.pair) {
    padding-right: 8px;
}
.navbar .pair {
    gap: 0;
}
.navbar .wide .caret {
    margin-left: 11px;
}

/* timeline */
.timeline {
    display: flex;
    align-items: flex-start;
    height: 100px;
    padding: 0 26px 0 18px;
    background: #f1f1f1;
    border-top: 2px solid #ccc;
    flex: none;
}
.player {
    display: flex;
    gap: 18px;
    padding-top: 32px;
}
.steps {
    display: flex;
    margin-left: 32px;
    padding-top: 30px;
}
.steps li {
    width: 48px;
    height: 52px;
    position: relative;
    padding-left: 10px;
}
.steps li::after {
    content: "";
    position: absolute;
    left: 26px;
    bottom: 0;
    width: 48px;
    height: 14px;
    border-left: 4px solid #ccc;
    border-bottom: 4px solid #ccc;
}
.steps li:last-child::after {
    width: 4px;
}
.marker {
    width: 24px;
    height: 64px;
    margin-top: 18px;
    margin-left: -10px;
}
.settings {
    margin-left: auto;
    margin-top: 32px;
}
```
